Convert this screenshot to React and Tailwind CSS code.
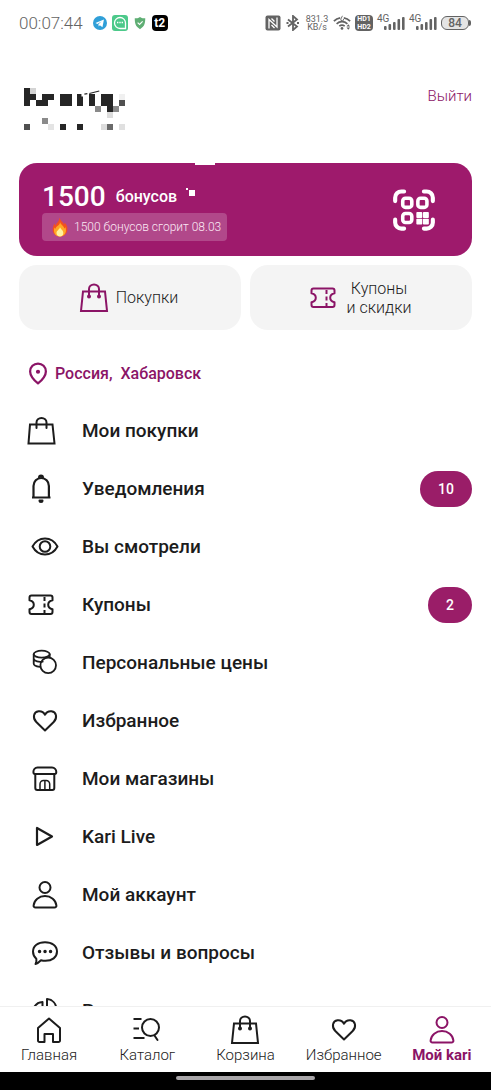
import React from 'react';

// Icons share one stroke style, colour comes from the parent text colour
const Icon = ({ children, className = 'w-8 h-8', width = 2 }) => (
  <svg
    viewBox="0 0 32 32"
    className={className}
    fill="none"
    stroke="currentColor"
    strokeWidth={width}
    strokeLinecap="round"
    strokeLinejoin="round"
    aria-hidden="true"
  >
    {children}
  </svg>
);

const BagIcon = () => (
  <Icon>
    <path d="M5 9.500h22l2 19.500H3z" strokeLinejoin="miter" />
    <path d="M11 14V7a5 4.500 0 0 1 10 0v7" />
    <circle cx="11" cy="14.500" r="1" fill="currentColor" />
    <circle cx="21" cy="14.500" r="1" fill="currentColor" />
  </Icon>
);

const PlainBagIcon = () => (
  <Icon>
    <path d="M5 9.500h22.500l2 19H3.500z" strokeLinejoin="miter" />
    <path d="M11.500 13V7.500a5 4.500 0 0 1 10 0V13" />
  </Icon>
);

const BellIcon = () => (
  <Icon>
    <path d="M8.500 24V13a7.700 8 0 0 1 15.400 0v11" strokeWidth="2.200" />
    <path d="M8 24.500h16.500" strokeLinecap="square" />
    <path d="M14 4.500a2 2 0 0 1 4 0M14.500 27.500h3a1.500 1.500 0 0 1-3 0z" fill="currentColor" />
  </Icon>
);

const EyeIcon = () => (
  <Icon>
    <path d="M3.500 15.500C6.500 10 11 7.500 16 7.500s9.500 2.500 12.500 8c-3 5.500-7.500 8-12.500 8s-9.500-2.500-12.500-8z" />
    <circle cx="16" cy="15.500" r="5.300" />
  </Icon>
);

const TicketIcon = () => (
  <Icon>
    <path d="M6.500 6.500h19a2 2 0 0 1 2 2v2.700c-2.800.6-4.300 2.300-4.300 4.500s1.500 3.900 4.300 4.500v2.800a2 2 0 0 1-2 2h-19a2 2 0 0 1-2-2v-2.800c2.800-.6 4.300-2.300 4.300-4.500s-1.500-3.900-4.300-4.500V8.500a2 2 0 0 1 2-2z" />
    <path d="M19.500 8v16" strokeDasharray="4 2.500" strokeLinecap="butt" />
  </Icon>
);

const CoinsIcon = () => (
  <Icon width={1.8}>
    <ellipse cx="12.700" cy="7.200" rx="8" ry="3.500" />
    <path d="M4.700 7.200v9.300c0 1.800 2.500 3 6 3.300M4.700 11.800c.8 2.500 5 3.500 9 2.800M20.700 7.200v2.800" />
    <circle cx="19.200" cy="18.300" r="7.800" />
  </Icon>
);

const HeartIcon = () => (
  <Icon>
    <path d="M16 25.500 7.300 17C3.300 13 4.500 7 9.500 6.200c2.800-.3 5.200 1 6.500 3.500 1.300-2.500 3.700-3.800 6.500-3.500 5 .8 6.200 6.800 2.200 10.800z" />
  </Icon>
);

const ShopIcon = () => (
  <Icon>
    <path d="M8.500 4.500h14.500c2.500 0 4.300 2 4.300 4.500 0 1.500-.6 2-1.600 2H6c-1 0-1.600-.5-1.600-2 0-2.500 1.600-4.500 4.100-4.500z" />
    <path d="M6.300 11v14a2 2 0 0 0 2 2h15a2 2 0 0 0 2-2V11" />
    <path d="M11 27v-6a3.500 3.500 0 0 1 3.500-3.500h2.700a3.500 3.500 0 0 1 3.500 3.500v6M15.900 18v9" strokeWidth="1.500" />
  </Icon>
);

const PlayIcon = () => (
  <Icon width={2.200}>
    <path d="M8 7v17l15-8.500z" />
  </Icon>
);

const UserIcon = () => (
  <Icon>
    <circle cx="16" cy="8.500" r="5.500" />
    <path d="M6.500 28.500c-1.300 0-2-1-1.900-2C5.200 21 10 17 16 17s10.800 4 11.400 9.500c.1 1-.6 2-1.900 2z" />
  </Icon>
);

const ChatIcon = () => (
  <Icon>
    <path d="M6.500 27c1.300-1.800 1-3 .8-5.200C5.200 20 4 17.300 4 14.600 4 8.800 9 5.200 16 5.200s12 3.600 12 9.400-5 9.200-11.500 9.200c-2 0-3.500-.3-4.500-.6-2 2-3.500 3.300-5.500 3.800z" />
    <path d="M10.500 14.500h.1M16 14.500h.1M21.500 14.500h.1" strokeWidth="3.400" />
  </Icon>
);

const PieIcon = () => (
  <Icon>
    <path d="M13.500 7v10l7 7.500A10 10 0 1 1 13.500 7z" />
    <path d="M18 4v11.500h9.500c0-7-4-11-9.500-11.500z" />
  </Icon>
);

const PinIcon = () => (
  <Icon className="w-6 h-6" width={3}>
    <path d="M16 28.500C10 23.500 5.500 18 5.500 12.500a10.500 10.500 0 0 1 21 0c0 5.500-4.500 11-10.500 16z" />
    <circle cx="16" cy="13" r="1.300" fill="currentColor" />
  </Icon>
);

const HomeIcon = () => (
  <Icon>
    <path d="M16 4.500 5 14v12.500A1.500 1.500 0 0 0 6.500 28h5v-8h8.500v8h5.500a1.500 1.500 0 0 0 1.500-1.500V14z" />
  </Icon>
);

const CatalogIcon = () => (
  <Icon>
    <path d="M3.500 5h6M3.500 14.500H7M3.500 24h9" strokeLinecap="square" />
    <circle cx="19.500" cy="13.500" r="8.500" />
    <path d="m23.500 21.500 3 4.500" />
  </Icon>
);

const QrIcon = () => (
  <Icon className="w-11 h-11" width={2.600}>
    <path d="M2.300 9.500V7a4.500 4.500 0 0 1 4.500-4.500h2M23.200 2.500h2A4.500 4.500 0 0 1 29.700 7v2.500M29.700 23v2a4.500 4.500 0 0 1-4.500 4.500h-2M8.800 29.500h-2A4.500 4.500 0 0 1 2.300 25v-2" strokeWidth="3" />
    <g strokeWidth="2.600">
      <rect x="7.800" y="7.500" width="6.600" height="6.600" rx="2" />
      <rect x="18.800" y="7.500" width="6.600" height="6.600" rx="2" />
      <rect x="7.800" y="18.500" width="6.600" height="6.600" rx="2" />
    </g>
    <g fill="currentColor" stroke="none">
      <rect x="17.700" y="17.500" width="4.300" height="4.300" rx=".6" />
      <rect x="22.500" y="17.500" width="4.300" height="4.300" rx=".6" />
      <rect x="17.700" y="22.300" width="4.300" height="4.300" rx=".6" />
      <rect x="22.500" y="22.300" width="4.300" height="4.300" rx=".6" />
    </g>
  </Icon>
);

const FlameIcon = () => (
  <svg viewBox="0 0 16 20" className="w-4 h-5" aria-hidden="true">
    <path d="M7.500.5c1 3.500 3.500 4.500 4.500 7 .5-.6.700-1.200.700-2C15 8 16 11 15.200 14c-.8 3.400-3.700 5.500-7.200 5.500S1.500 17.400.8 14C.2 11 1.500 8.500 2.500 6.500c.3 1 .6 1.600 1.200 2C4.500 5.500 7.500 4.500 7.500.5z" fill="#f4511e" />
    <path d="M8 5c.5 2.500 4 4 4.300 6.500.5-.3.800-.8 1-1.500C15 14 13.500 19.500 8 19.500S1 14.500 2.500 10.500c.3.700.6 1 1 1.200C4 9 8 8.500 8 5z" fill="#ffa726" />
    <path d="M8 10c.3 2 3.300 3 3.300 6 0 2-1.300 3.500-3.300 3.500S4.500 18 4.500 16c0-2.500 3.300-3.500 3.500-6z" fill="#fff3a0" />
  </svg>
);

// Pixelated user name: [x, y, colour]
const DARK = '#262626';
const namePixels = [
  [0, 0, DARK], [1, 0, '#d4d4d4'],
  [0, 1, DARK], [1, 1, DARK], [3, 1, DARK], [4, 1, DARK], [6, 1, DARK], [7, 1, DARK],
  [9, 1, DARK], [11, 1, DARK], [13, 1, DARK], [14, 1, DARK], [16, 1, '#f0f0f0'],
  [0, 2, DARK], [2, 2, DARK], [3, 2, DARK], [6, 2, DARK], [7, 2, DARK], [9, 2, DARK],
  [11, 2, DARK], [13, 2, DARK], [14, 2, DARK], [16, 2, '#505050'],
  [12, 3, '#8a8a8a'], [14, 3, DARK], [15, 3, '#8a8a8a'],
  [14, 4, '#dcdcdc'], [3, 5, '#8a8a8a'],
  [0, 6, '#505050'], [4, 6, '#e4e4e4'], [6, 6, DARK], [9, 6, DARK],
  [13, 6, '#dcdcdc'], [14, 6, '#6a6a6a'], [16, 6, '#e0e0e0'],
];

const UserName = () => (
  <svg viewBox="0 0 102 42" preserveAspectRatio="none" className="w-[101px] h-[42px]" aria-hidden="true">
    <g shapeRendering="crispEdges">
      {namePixels.map(([x, y, color]) => (
        <rect key={`${x}-${y}`} x={x * 6} y={y * 6} width="6" height="6" fill={color} />
      ))}
    </g>
    <path d="M58 5.500h5l-3 3h-2z" fill="#fff" />
    <path d="m66 5.500 10-2.500M61 6.200l3-.5" stroke={DARK} strokeWidth="1.200" />
  </svg>
);

const Signal = () => (
  <div className="relative w-7 h-4">
    <span className="absolute -top-0.5 left-0 text-[10px] leading-3">4G</span>
    <svg viewBox="0 0 28 16" className="w-7 h-4" fill="#636363" aria-hidden="true">
      <rect x="7" y="11" width="2.600" height="4" rx="1" />
      <rect x="11.500" y="9" width="2.600" height="6" rx="1" />
      <rect x="16" y="7" width="2.600" height="8" rx="1" />
      <rect x="20.500" y="4" width="2.600" height="11" rx="1" />
      <rect x="25" y="2" width="2.600" height="13" rx="1" />
    </svg>
  </div>
);

const StatusBar = () => (
  <div className="flex h-[45px] shrink-0 items-center pl-[19px] pr-5 text-[#636363]">
    <span className="text-[17px] font-light leading-5">00:07:44</span>
    <div className="ml-2.5 flex items-center gap-[5px]">
      <svg viewBox="0 0 16 16" className="w-3.5 h-3.5" aria-hidden="true">
        <circle cx="8" cy="8" r="8" fill="#2f9fd8" />
        <path d="m2.800 8 9.700-4-1.700 8.800-3-2.200-1.300 1.300-.3-2.500 3.800-3.400-5 3z" fill="#fff" />
      </svg>
      <svg viewBox="0 0 16 16" className="w-4 h-4" aria-hidden="true">
        <rect width="16" height="16" rx="3" fill="#4cc98a" />
        <path d="M13.500 13.500H8A5.500 5.500 0 1 1 13.500 8z" fill="none" stroke="#fff" strokeWidth="1.300" />
        <path d="M5 7.500h1.400M7.300 7.500h1.400M9.600 7.500H11" stroke="#fff" strokeWidth="1.400" />
      </svg>
      <svg viewBox="0 0 16 16" className="w-3.5 h-3.5" aria-hidden="true">
        <path d="M8 1c2 1.300 3.800 1.600 6 1.600 0 6-1 9.400-6 12.400-5-3-6-6.400-6-12.400C4.200 2.600 6 2.300 8 1z" fill="#5fae74" />
        <path d="m5.300 7.500 2.200 2.200 3.500-3.500" fill="none" stroke="#fff" strokeWidth="1.300" />
      </svg>
      <span className="flex h-4 w-4 items-center justify-center rounded bg-black text-[12px] font-bold leading-3 text-white">t2</span>
    </div>
    <div className="ml-auto flex items-center gap-1">
      <svg viewBox="0 0 16 16" className="w-4 h-4" aria-hidden="true">
        <rect x=".5" y=".5" width="15" height="15" rx="2" fill="#636363" />
        <path d="M4 13.500V4.500L12 12V2.500M6.500 3.500l3 3M9.500 13l-3-3" fill="none" stroke="#fff" strokeWidth="1.300" />
      </svg>
      <svg viewBox="0 0 16 16" className="w-4 h-4" fill="none" stroke="#636363" strokeWidth="1.800" aria-hidden="true">
        <path d="m3 4.500 9 7L8 15V1l4 3.500-9 7" />
        <path d="M1.500 8h2M12 8h2" strokeWidth="2" />
      </svg>
      <div className="w-6 text-center text-[9px] leading-2">
        <div>831.3</div>
        <div>KB/s</div>
      </div>
      <svg viewBox="0 0 20 16" className="w-[18px] h-4" fill="none" stroke="#636363" strokeWidth="1.900" aria-hidden="true">
        <path d="M1 6C3.500 3.300 6 2.500 8 2.200M12 2.200c2 .3 4.500 1.100 7 3.800M4 9c3.500-3.300 8.500-3.300 12 0M7 11.500c2-1.600 4-1.600 6 0" />
        <path d="M10.500 0 8.800 3.500a1.500 1.500 0 1 0 2.800 0" strokeWidth="1" />
        <circle cx="10" cy="14" r="1.500" fill="#636363" stroke="none" />
        <path d="m15 12 2-2.500 2 2.500zM15 13l2 2.500 2-2.500z" fill="#636363" stroke="none" />
      </svg>
      <div className="w-[18px] rounded-sm bg-[#636363] text-center text-[7px] font-bold leading-2 text-white">
        <div>HD1</div>
        <div>HD2</div>
      </div>
      <Signal />
      <Signal />
      <div className="flex items-center">
        <div className="flex h-3.5 w-7 items-center justify-center rounded-md border border-[#636363] bg-[#e4e4e4] text-[12px] font-medium leading-3">
          84
        </div>
        <span className="h-1.5 w-0.5 rounded-r bg-[#636363]" />
      </div>
    </div>
  </div>
);

const menuItems = [
  { label: 'Мои покупки', icon: PlainBagIcon, indent: 'pl-0' },
  { label: 'Уведомления', icon: BellIcon, badge: 10, indent: 'pl-0' },
  { label: 'Вы смотрели', icon: EyeIcon, indent: 'pl-1' },
  { label: 'Купоны', icon: TicketIcon, badge: 2, indent: 'pl-0' },
  { label: 'Персональные цены', icon: CoinsIcon, indent: 'pl-1' },
  { label: 'Избранное', icon: HeartIcon, indent: 'pl-1' },
  { label: 'Мои магазины', icon: ShopIcon, indent: 'pl-1' },
  { label: 'Kari Live', icon: PlayIcon, indent: 'pl-1' },
  { label: 'Мой аккаунт', icon: UserIcon, indent: 'pl-1' },
  { label: 'Отзывы и вопросы', icon: ChatIcon, indent: 'pl-1' },
  { label: 'Рассрочка', icon: PieIcon, indent: 'pl-1' },
];

const MenuItem = ({ label, icon: ItemIcon, badge, indent }) => (
  <li>
    <button type="button" className="flex h-[58px] w-full items-center pl-[25px] pr-[19px] text-left">
      <span className={`w-[57px] shrink-0 ${indent}`}>
        <ItemIcon />
      </span>
      <span className="text-[19px] font-medium">{label}</span>
      {badge && (
        <span className="ml-auto rounded-full bg-[#9a1d68] px-[18px] py-2 text-[14px] font-medium leading-5 text-white">
          {badge}
        </span>
      )}
    </button>
  </li>
);

const tabs = [
  { label: 'Главная', icon: HomeIcon },
  { label: 'Каталог', icon: CatalogIcon },
  { label: 'Корзина', icon: BagIcon },
  { label: 'Избранное', icon: HeartIcon },
  { label: 'Мой kari', icon: UserIcon, active: true },
];

const App = () => {
  return (
    <div className="flex h-screen flex-col overflow-hidden bg-white font-['Roboto',sans-serif] text-[#1c1c1c]">
      <StatusBar />

      <main className="min-h-0 flex-1 overflow-x-hidden overflow-y-auto [scrollbar-width:none]">
        <header className="flex items-start justify-between pl-6 pr-[19px] pt-[43px]">
          <UserName />
          <button type="button" className="text-[15px] font-light leading-4 text-[#8b1466]">Выйти</button>
        </header>

        {/* Bonus card */}
        <section className="relative mx-[19px] mt-[33px] flex h-[93px] items-center justify-between rounded-[18px] bg-[#9e1a6c] pl-[23px] pr-9 text-white">
          <span className="absolute left-44 top-0 h-0.5 w-5 bg-white" />
          <div className="pt-0.5">
            <div className="flex items-center">
              <span className="text-[28px] font-medium leading-8">1500</span>
              <span className="ml-2.5 text-[16px] font-medium leading-8">бонусов</span>
              <svg viewBox="0 0 12 20" className="ml-2 w-3 h-5" aria-hidden="true">
                <path d="M1 1h2v2H1zM4 3h6v6H4z" fill="#fff" />
              </svg>
            </div>
            <div className="flex h-7 w-fit items-center gap-1.5 rounded bg-[#b1488a] pl-2.5 pr-1.5 text-[12px] font-light text-[#fbe9f5]">
              <FlameIcon />
              <span>1500 бонусов сгорит 08.03</span>
            </div>
          </div>
          <button type="button" aria-label="QR">
            <QrIcon />
          </button>
        </section>

        <div className="mx-[19px] mt-[9px] grid grid-cols-2 gap-[9px]">
          <button type="button" className="flex h-[65px] items-center justify-center gap-1.5 rounded-[18px] bg-[#f4f4f4] pr-1">
            <span className="text-[#8b1466]"><BagIcon /></span>
            <span className="text-[16px] font-light">Покупки</span>
          </button>
          <button type="button" className="flex h-[65px] items-center justify-center gap-2 rounded-[18px] bg-[#f4f4f4] pr-1">
            <span className="text-[#8b1466]"><TicketIcon /></span>
            <span className="text-[16px] font-light leading-[19px]">Купоны<br />и скидки</span>
          </button>
        </div>

        <button type="button" className="ml-[26px] mt-8 flex items-center gap-[5px] text-[#8b1466]">
          <PinIcon />
          <span className="whitespace-pre text-[16px] font-medium leading-6">Россия,  Хабаровск</span>
        </button>

        <ul className="mt-4">
          {menuItems.map((item) => (
            <MenuItem key={item.label} {...item} />
          ))}
        </ul>
      </main>

      {/* Bottom tabs */}
      <nav className="grid shrink-0 grid-cols-5 border-t border-[#f0f0f0] bg-white pb-2 pt-[7px]">
        {tabs.map(({ label, icon: TabIcon, active }) => (
          <a
            key={label}
            href="#"
            className={`flex flex-col items-center text-[15px] leading-[18px] ${
              active ? 'font-bold text-[#8b1466]' : 'font-light'
            }`}
          >
            <TabIcon />
            <span>{label}</span>
          </a>
        ))}
      </nav>
      <div className="flex h-[18px] shrink-0 justify-center bg-black pt-1">
        <span className="h-1 w-[139px] rounded-full bg-[#a8a5a8]" />
      </div>
    </div>
  );
};

export default App;
